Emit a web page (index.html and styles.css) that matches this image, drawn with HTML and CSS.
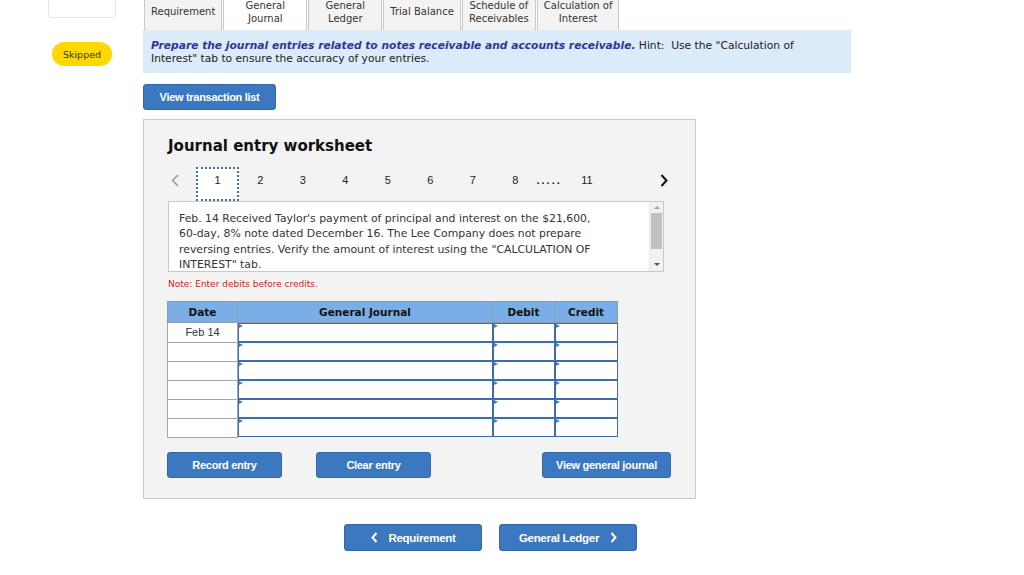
FILE: index.html
```html
<!DOCTYPE html>
<html lang="en">
<head>
    <meta charset="UTF-8">
    <meta name="viewport" content="width=device-width, initial-scale=1.0">
    <title>Journal Entry Worksheet</title>
    <link rel="stylesheet" href="styles.css">
</head>
<body>
    <div class="page">
        <aside class="side">
            <div class="side-card"></div>
            <span class="badge">Skipped</span>
        </aside>

        <main class="main">
            <div class="tabs">
                <div class="tab">Requirement</div>
                <div class="tab active">General<br>Journal</div>
                <div class="tab">General<br>Ledger</div>
                <div class="tab">Trial Balance</div>
                <div class="tab">Schedule of<br>Receivables</div>
                <div class="tab">Calculation of<br>Interest</div>
            </div>

            <div class="info">
                <b><i>Prepare the journal entries related to notes receivable and accounts receivable.</i></b>
                Hint:&nbsp; Use the "Calculation of<br>Interest" tab to ensure the accuracy of your entries.
            </div>

            <button class="btn btn-list">View transaction list</button>

            <div class="panel">
                <h2>Journal entry worksheet</h2>

                <div class="pager">
                    <span class="pager-arrow prev">
                        <svg width="8" height="13" viewBox="0 0 8 13"><path d="M7 1 L1.5 6.5 L7 12" fill="none" stroke="#999" stroke-width="1.5"/></svg>
                    </span>
                    <span class="page-item current">1</span>
                    <span class="page-item">2</span>
                    <span class="page-item">3</span>
                    <span class="page-item">4</span>
                    <span class="page-item">5</span>
                    <span class="page-item">6</span>
                    <span class="page-item">7</span>
                    <span class="page-item">8</span>
                    <span class="page-dots">.....</span>
                    <span class="page-item last">11</span>
                    <span class="pager-arrow next">
                        <svg width="8" height="13" viewBox="0 0 8 13"><path d="M1.5 1 L6.5 6.5 L1.5 12" fill="none" stroke="#111" stroke-width="2"/></svg>
                    </span>
                </div>

                <div class="transaction">
                    <div class="transaction-text">
                        Feb. 14 Received Taylor's payment of principal and interest on the $21,600,<br>
                        60-day, 8% note dated December 16. The Lee Company does not prepare<br>
                        reversing entries. Verify the amount of interest using the "CALCULATION OF<br>
                        INTEREST" tab.
                    </div>
                    <div class="scrollbar">
                        <span class="scroll-up"></span>
                        <span class="scroll-thumb"></span>
                        <span class="scroll-down"></span>
                    </div>
                </div>

                <div class="note">Note: Enter debits before credits.</div>

                <table class="journal">
                    <thead>
                        <tr>
                            <th class="col-date">Date</th>
                            <th class="col-account">General Journal</th>
                            <th class="col-debit">Debit</th>
                            <th class="col-credit">Credit</th>
                        </tr>
                    </thead>
                    <tbody id="journalRows"></tbody>
                </table>

                <div class="actions">
                    <button class="btn btn-action">Record entry</button>
                    <button class="btn btn-action">Clear entry</button>
                    <button class="btn btn-action btn-wide">View general journal</button>
                </div>
            </div>

            <div class="nav">
                <button class="btn btn-nav">
                    <svg width="7" height="11" viewBox="0 0 7 11"><path d="M5.5 1 L1.5 5.5 L5.5 10" fill="none" stroke="#fff" stroke-width="2"/></svg>
                    Requirement
                </button>
                <button class="btn btn-nav">
                    General Ledger
                    <svg width="7" height="11" viewBox="0 0 7 11"><path d="M1.5 1 L5.5 5.5 L1.5 10" fill="none" stroke="#fff" stroke-width="2"/></svg>
                </button>
            </div>
        </main>
    </div>

    <script>
        // build the six entry rows
        const dates = ['Feb 14', '', '', '', '', ''];
        const body = document.getElementById('journalRows');
        dates.forEach(function(d) {
            const tr = document.createElement('tr');
            tr.innerHTML =
                '<td class="date-cell">' + d + '</td>' +
                '<td class="input-cell"><div class="field"></div></td>' +
                '<td class="input-cell"><div class="field"></div></td>' +
                '<td class="input-cell"><div class="field"></div></td>';
            body.appendChild(tr);
        });
    </script>
</body>
</html>
```

FILE: styles.css
```css
* {
    box-sizing: border-box;
}

body {
    margin: 0;
    background: #fff;
    font-family: "DejaVu Sans", Verdana, sans-serif;
    color: #222;
    overflow: hidden;
}

.page {
    display: flex;
    align-items: flex-start;
}

.side {
    width: 143px;
    flex: none;
    display: flex;
    flex-direction: column;
}

.side-card {
    margin-left: 48px;
    width: 68px;
    height: 18px;
    border: 1px solid #e6e6e6;
    border-top: none;
    border-radius: 0 0 4px 4px;
    background: #fff;
}

.badge {
    margin: 24px 0 0 52px;
    width: 60px;
    height: 24px;
    border-radius: 12px;
    background: #ffd800;
    color: #333;
    font-size: 9.5px;
    display: flex;
    align-items: center;
    justify-content: center;
}

.main {
    width: 708px;
    display: flex;
    flex-direction: column;
    align-items: flex-start;
}

/* tabs */
.tabs {
    display: flex;
    gap: 1px;
    margin-left: 1px;
    margin-top: -13px;
}

.tab {
    min-width: 74px;
    height: 43px;
    padding: 5px 6px 0;
    border: 1px solid #c9c9c9;
    border-bottom: none;
    background: #f3f3f3;
    color: #333;
    font-size: 10px;
    line-height: 13px;
    text-align: center;
    display: flex;
    align-items: center;
    justify-content: center;
}

.tab.active {
    min-width: 84px;
    background: #fff;
}

.info {
    width: 708px;
    height: 43px;
    padding: 9px 8px 0;
    background: #dbebf9;
    font-size: 10.7px;
    line-height: 13px;
    color: #222;
}

.info b {
    color: #33339a;
}

/* buttons */
.btn {
    border: 1px solid #3369a8;
    border-radius: 3px;
    background: #3b78bf;
    color: #fff;
    font-family: "Liberation Sans", Arial, sans-serif;
    font-weight: bold;
    font-size: 11px;
    letter-spacing: -0.3px;
    cursor: pointer;
    padding: 0;
}

.btn-list {
    margin-top: 11px;
    width: 133px;
    height: 26px;
}

/* worksheet panel */
.panel {
    margin-top: 9px;
    width: 553px;
    height: 380px;
    padding: 17px 24px 0;
    border: 1px solid #cccccc;
    background: #f3f3f3;
}

.panel h2 {
    margin: 0;
    font-size: 15px;
    line-height: 18px;
    font-weight: bold;
    color: #111;
}

.pager {
    margin-top: 12px;
    height: 34px;
    display: flex;
    align-items: center;
    font-family: "Liberation Sans", Arial, sans-serif;
    font-size: 11px;
    color: #222;
}

.pager-arrow {
    display: flex;
    align-items: center;
    padding-bottom: 8px;
}

.pager-arrow.prev {
    width: 28px;
    padding-left: 3px;
}

.pager-arrow.next {
    margin-left: auto;
    margin-right: 3px;
}

.page-item {
    width: 42.5px;
    height: 34px;
    padding-bottom: 8px;
    display: flex;
    align-items: center;
    justify-content: center;
}

.page-item.current {
    width: 43px;
    background: #fff;
    border: 2px dotted #3d6fc0;
}

.page-item.last {
    width: 53px;
}

.page-dots {
    width: 24px;
    padding-bottom: 8px;
    text-align: center;
    font-weight: bold;
    letter-spacing: 2px;
}

.transaction {
    width: 496px;
    height: 71px;
    display: flex;
    border: 1px solid #c8c8c8;
    background: #fff;
}

.transaction-text {
    flex: 1;
    padding: 9px 0 0 10px;
    font-size: 10.85px;
    line-height: 15.3px;
    color: #333;
    white-space: nowrap;
    overflow: hidden;
}

.scrollbar {
    width: 14px;
    display: flex;
    flex-direction: column;
    align-items: center;
    background: #f1f1f1;
    border-left: 1px solid #e8e8e8;
}

.scroll-up {
    margin-top: 4px;
    width: 0;
    height: 0;
    border-left: 3px solid transparent;
    border-right: 3px solid transparent;
    border-bottom: 3px solid #a3a3a3;
}

.scroll-thumb {
    margin-top: 4px;
    width: 11px;
    height: 36px;
    background: #c1c1c1;
}

.scroll-down {
    margin-top: auto;
    margin-bottom: 5px;
    width: 0;
    height: 0;
    border-left: 3px solid transparent;
    border-right: 3px solid transparent;
    border-top: 3px solid #505050;
}

.note {
    margin-top: 6px;
    font-size: 9px;
    line-height: 12px;
    color: #c4272b;
}

/* journal table */
.journal {
    margin-top: 11px;
    margin-left: -1px;
    border-collapse: collapse;
    width: 451px;
    table-layout: fixed;
}

.journal th {
    height: 21px;
    background: #7aaee6;
    border: 1px solid #8a9cb2;
    font-size: 10.5px;
    font-weight: bold;
    color: #111;
    padding: 0;
}

.col-date { width: 70px; }
.col-account { width: 255px; }
.col-debit { width: 62px; }
.col-credit { width: 63px; }

.journal td {
    height: 19px;
    padding: 0;
}

.date-cell {
    background: #fff;
    border: 1px solid #a6a6a6;
    text-align: center;
    font-family: "Liberation Sans", Arial, sans-serif;
    font-size: 11px;
    color: #333;
}

.input-cell {
    border: none;
}

.field {
    position: relative;
    height: 19px;
    background: #fff;
    border: 1.5px solid #3e6ca8;
    border-left-width: 1px;
}

.field::before {
    content: "";
    position: absolute;
    left: 0;
    top: 0;
    border-top: 2.5px solid transparent;
    border-bottom: 2.5px solid transparent;
    border-left: 4px solid #3f7fcf;
}

.actions {
    margin-top: 14px;
    margin-left: -1px;
    display: flex;
    gap: 34px;
}

.btn-action {
    width: 115px;
    height: 26px;
}

.btn-wide {
    width: 129px;
    margin-left: auto;
}

/* bottom navigation */
.nav {
    margin: 25px 0 0 201px;
    display: flex;
    gap: 17px;
}

.btn-nav {
    width: 138px;
    height: 27px;
    display: flex;
    align-items: center;
    justify-content: center;
    gap: 11px;
    font-size: 11.5px;
}
```
